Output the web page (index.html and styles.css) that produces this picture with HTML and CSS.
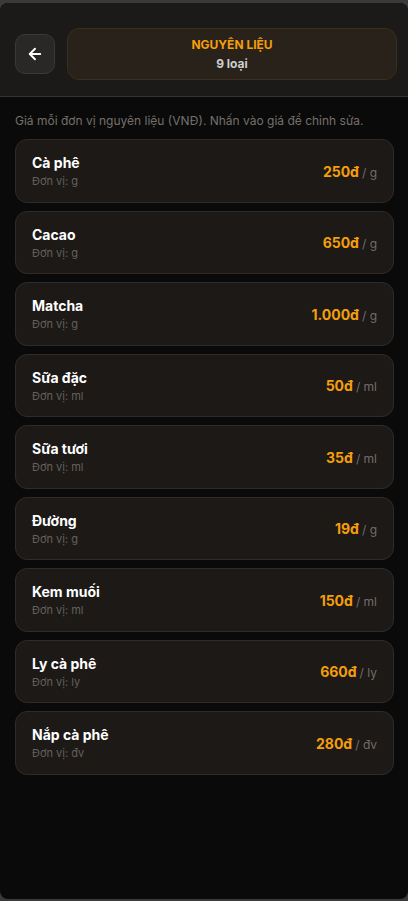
FILE: index.html
```html
<!DOCTYPE html>
<html lang="vi">
<head>
<meta charset="utf-8">
<link rel="stylesheet" href="styles.css">
</head>
<body>
<div class="app">
  <header class="header">
    <button class="back" aria-label="Quay lại">
      <svg width="18" height="18" viewBox="0 0 24 24" fill="none" stroke="#fff" stroke-width="2.5" stroke-linecap="round" stroke-linejoin="round"><path d="M19 12H5"/><path d="M12 19l-7-7 7-7"/></svg>
    </button>
    <div class="title-box">
      <div class="title">NGUYÊN LIỆU</div>
      <div class="subtitle">9 loại</div>
    </div>
  </header>
  <main class="content">
    <p class="desc">Giá mỗi đơn vị nguyên liệu (VNĐ). Nhấn vào giá để chỉnh sửa.</p>
    <div class="list">
      <div class="card"><div class="info"><div class="name">Cà phê</div><div class="unit">Đơn vị: g</div></div><div class="price"><span class="amount">250đ</span><span class="per">/ g</span></div></div>
      <div class="card"><div class="info"><div class="name">Cacao</div><div class="unit">Đơn vị: g</div></div><div class="price"><span class="amount">650đ</span><span class="per">/ g</span></div></div>
      <div class="card"><div class="info"><div class="name">Matcha</div><div class="unit">Đơn vị: g</div></div><div class="price"><span class="amount">1.000đ</span><span class="per">/ g</span></div></div>
      <div class="card"><div class="info"><div class="name">Sữa đặc</div><div class="unit">Đơn vị: ml</div></div><div class="price"><span class="amount">50đ</span><span class="per">/ ml</span></div></div>
      <div class="card"><div class="info"><div class="name">Sữa tươi</div><div class="unit">Đơn vị: ml</div></div><div class="price"><span class="amount">35đ</span><span class="per">/ ml</span></div></div>
      <div class="card"><div class="info"><div class="name">Đường</div><div class="unit">Đơn vị: g</div></div><div class="price"><span class="amount">19đ</span><span class="per">/ g</span></div></div>
      <div class="card"><div class="info"><div class="name">Kem muối</div><div class="unit">Đơn vị: ml</div></div><div class="price"><span class="amount">150đ</span><span class="per">/ ml</span></div></div>
      <div class="card"><div class="info"><div class="name">Ly cà phê</div><div class="unit">Đơn vị: ly</div></div><div class="price"><span class="amount">660đ</span><span class="per">/ ly</span></div></div>
      <div class="card"><div class="info"><div class="name">Nắp cà phê</div><div class="unit">Đơn vị: đv</div></div><div class="price"><span class="amount">280đ</span><span class="per">/ đv</span></div></div>
    </div>
  </main>
</div>
</body>
</html>
```

FILE: styles.css
```css
* { box-sizing: border-box; }
html, body { height: 100%; }
body {
  margin: 0;
  padding: 3px 0 2px;
  background: #3a3a3a;
  font-family: Inter, "Noto Sans", sans-serif;
  color: #fff;
}
.app {
  height: 100%;
  background: #0a0a0a;
  border-radius: 8px;
  overflow: hidden;
  display: flex;
  flex-direction: column;
}
.header {
  display: flex;
  align-items: center;
  gap: 12px;
  padding: 25px 11px 16px 15px;
  background: #1c1a18;
  border-bottom: 1px solid #37332e;
}
.back {
  width: 40px;
  height: 40px;
  flex: none;
  border-radius: 10px;
  background: #2a2826;
  border: 1px solid #3b3835;
  display: flex;
  align-items: center;
  justify-content: center;
  padding: 0;
}
.title-box {
  flex: 1;
  height: 52px;
  border-radius: 12px;
  background: #28221a;
  border: 1px solid #3a2f1e;
  display: flex;
  flex-direction: column;
  align-items: center;
  justify-content: center;
  gap: 3px;
}
.title {
  color: #f59e0b;
  font-size: 12px;
  font-weight: 700;
  line-height: 16px;
}
.subtitle {
  color: #cfcfcf;
  font-size: 12px;
  font-weight: 700;
  line-height: 16px;
}
.content {
  padding: 16px 14px 0 15px;
}
.desc {
  margin: 0 0 10px;
  color: #75706b;
  font-size: 12px;
  line-height: 16px;
}
.list {
  display: flex;
  flex-direction: column;
  gap: 8px;
}
.card {
  display: flex;
  align-items: center;
  justify-content: space-between;
  padding: 12.25px 16px;
  background: #1c1917;
  border: 1px solid #2f2b28;
  border-radius: 12px;
}
.name {
  font-size: 14px;
  font-weight: 700;
  line-height: 21px;
  color: #fff;
}
.unit {
  margin-top: 1px;
  font-size: 11px;
  line-height: 15px;
  color: #66605b;
}
.amount {
  color: #f59e0b;
  font-size: 14px;
  font-weight: 700;
}
.per {
  margin-left: 3px;
  color: #736d68;
  font-size: 12px;
}
```
